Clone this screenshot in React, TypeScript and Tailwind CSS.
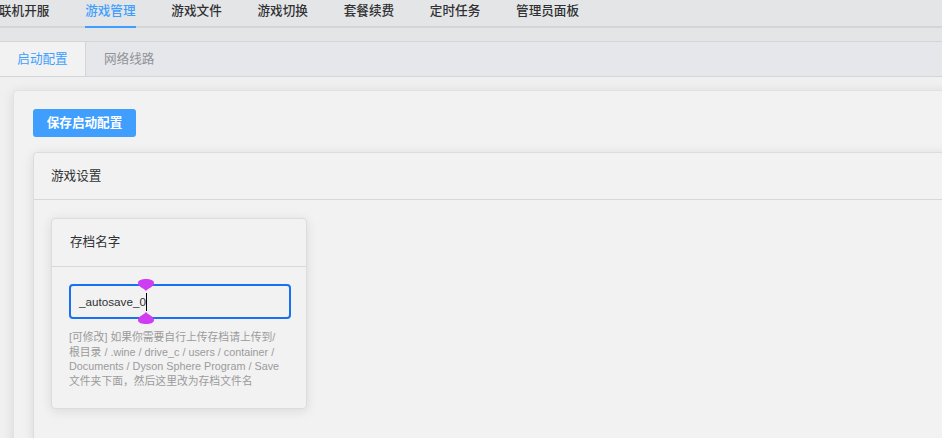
const navItems = ["联机开服", "游戏管理", "游戏文件", "游戏切换", "套餐续费", "定时任务", "管理员面板"]

function Handle({ up }: { up?: boolean }) {
  return (
    <svg width="16" height="12" viewBox="0 0 16 12" className="block">
      {up ? (
        <path d="M8 0 C10 3 16 4 16 8 C16 11 12 12 8 12 C4 12 0 11 0 8 C0 4 6 3 8 0 Z" fill="#cf3df2" />
      ) : (
        <path d="M8 12 C10 9 16 8 16 4 C16 1 12 0 8 0 C4 0 0 1 0 4 C0 8 6 9 8 12 Z" fill="#cf3df2" />
      )}
    </svg>
  )
}

export default function App() {
  return (
    <div
      className="w-[942px] h-[438px] overflow-hidden bg-[#f0f0f0] text-[#303133]"
      style={{ fontFamily: '"Liberation Sans", "Noto Sans CJK SC", sans-serif' }}
    >
      {/* Top menu */}
      <div className="h-[28px] bg-[#e4e5e7] border-b-2 border-[#d4d5d7] flex -ml-[1px] gap-[35.8px]">
        {navItems.map((item, i) => (
          <div key={item} className="relative h-[26px] pb-[4px] flex items-center whitespace-nowrap">
            <span className={`text-[12.6px] font-medium ${i === 1 ? "text-[#409eff]" : "text-[#303133]"}`}>{item}</span>
            {i === 1 && <span className="absolute left-0 right-0 -bottom-[2px] h-[2px] bg-[#409eff]" />}
          </div>
        ))}
      </div>
      <div className="h-[13px] bg-[#e4e5e7]" />

      {/* Tabs */}
      <div className="h-[36px] bg-[#e6e7ea] border-y border-[#d4d5d8] flex">
        <div className="w-[86px] h-full bg-[#f2f2f2] border-r border-[#d4d5d8] flex items-center justify-center text-[12.6px] text-[#409eff]">
          启动配置
        </div>
        <div className="px-[18px] h-full flex items-center text-[12.6px] text-[#909399]">网络线路</div>
      </div>

      {/* Content */}
      <div className="pl-[13px] pt-[13px]">
        <div className="w-[1000px] bg-[#f2f2f2] border border-[#e2e2e2] rounded-[4px] shadow-[0_2px_12px_rgba(0,0,0,0.1)] px-[19px] pt-[18px]">
          <button className="w-[103px] h-[28px] rounded-[3px] bg-[#409eff] text-white text-[12.6px] font-semibold">
            保存启动配置
          </button>

          <div className="mt-[15px] bg-[#f2f2f2] border border-[#dcdcdc] rounded-[4px] shadow-[0_2px_12px_rgba(0,0,0,0.1)]">
            <div className="h-[47px] px-[17px] flex items-center border-b border-[#d8d8d8] text-[12.6px]">游戏设置</div>
            <div className="p-[17px] pt-[18px] pb-[40px]">
              <div className="w-[256px] h-[191px] bg-[#f2f2f2] border border-[#dcdcdc] rounded-[4px] shadow-[0_2px_12px_rgba(0,0,0,0.1)]">
                <div className="h-[48px] px-[18px] flex items-center border-b border-[#d8d8d8] text-[12.6px]">存档名字</div>
                <div className="px-[17px] pt-[17px]">
                  <div className="relative w-[222px] h-[35px] border-2 border-[#1672f3] rounded-[4px] flex items-center pl-[8px] text-[11.7px] text-[#303133]">
                    <span>_autosave_0</span>
                    <span className="w-px h-[18px] bg-black" />
                    <div className="absolute left-[67px] -top-[7px]"><Handle /></div>
                    <div className="absolute left-[67px] -bottom-[7px]"><Handle up /></div>
                  </div>
                  <p className="mt-[11px] text-[10.8px] leading-[14.5px] text-[#9b9b9b] whitespace-nowrap">
                    [可修改] 如果你需要自行上传存档请上传到/
                    <br />根目录 / .wine / drive_c / users / container /
                    <br />Documents / Dyson Sphere Program / Save
                    <br />文件夹下面，然后这里改为存档文件名
                  </p>
                </div>
              </div>
            </div>
          </div>
        </div>
      </div>
    </div>
  )
}
